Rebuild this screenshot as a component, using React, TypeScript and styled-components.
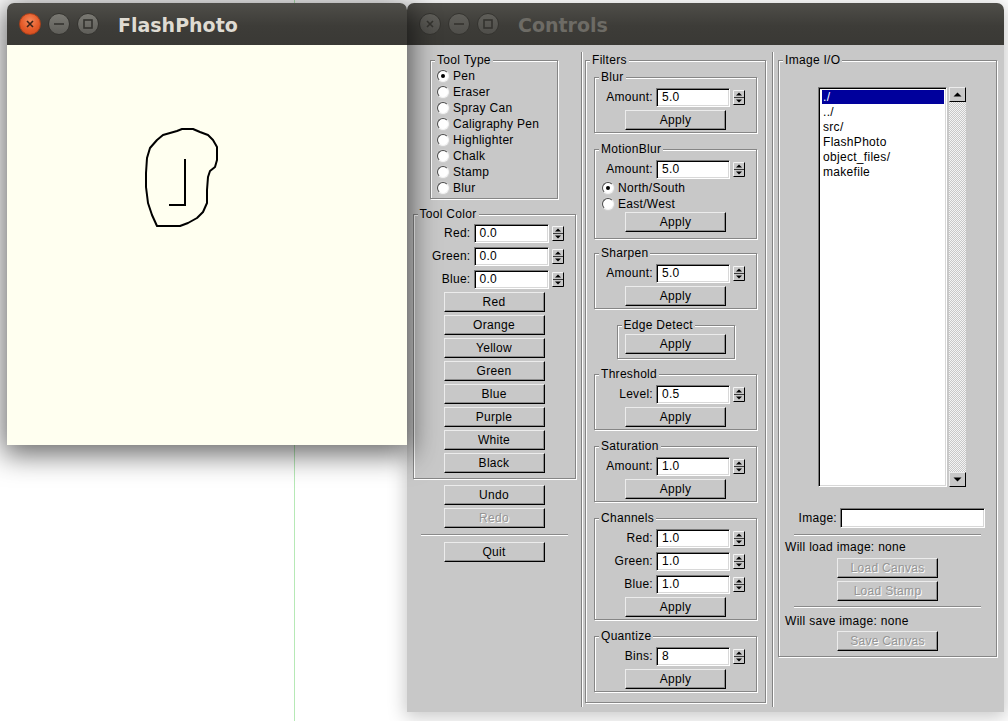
import React from 'react';
import styled, { createGlobalStyle } from 'styled-components';

const GlobalStyle = createGlobalStyle`
  html, body {
    margin: 0;
    padding: 0;
    background: #ffffff;
  }
  body {
    font-family: "Liberation Sans", Arial, Helvetica, sans-serif;
    font-size: 12px;
    color: #000;
    overflow: hidden;
  }
`;

const Desktop = styled.div`
  position: relative;
  width: 1008px;
  height: 721px;
  overflow: hidden;
  background: #ffffff;
`;

const GuideLine = styled.div`
  position: absolute;
  top: 0;
  bottom: 0;
  left: 294px;
  width: 1px;
  background: #b6e9b6;
`;

const Window = styled.div<{ $left: number; $width: number; $height: number; $front?: boolean }>`
  position: absolute;
  top: 3px;
  left: ${(p) => p.$left}px;
  width: ${(p) => p.$width}px;
  height: ${(p) => p.$height}px;
  display: flex;
  flex-direction: column;
  border-radius: 7px 7px 0 0;
  z-index: ${(p) => (p.$front ? 2 : 1)};
  box-shadow: ${(p) =>
    p.$front ? '0 6px 28px 4px rgba(0, 0, 0, 0.58)' : '0 3px 18px 2px rgba(0, 0, 0, 0.22)'};
`;

const TitleBar = styled.div`
  flex: none;
  height: 42px;
  display: flex;
  align-items: center;
  gap: 7px;
  padding-left: 12px;
  border-radius: 7px 7px 0 0;
  background: linear-gradient(#4f4e49, #3d3c38 55%, #3a3935);
`;

const TitleButton = styled.span<{ $tone: 'close' | 'plain' | 'idle' }>`
  box-sizing: border-box;
  width: 22px;
  height: 22px;
  border-radius: 50%;
  display: flex;
  align-items: center;
  justify-content: center;
  border: 1px solid ${(p) => (p.$tone === 'close' ? '#a9401b' : '#353430')};
  background: ${(p) =>
    p.$tone === 'close'
      ? 'radial-gradient(circle at 50% 35%, #f48a5c, #e45a28 55%, #cf4a1c)'
      : p.$tone === 'plain'
      ? 'linear-gradient(#7a7973, #5f5e59)'
      : 'linear-gradient(#5f5e59, #4f4e4a)'};
`;

const WindowTitle = styled.span<{ $active?: boolean }>`
  margin-left: 12px;
  padding-top: 1px;
  font-family: "DejaVu Sans", "Open Sans", sans-serif;
  font-weight: bold;
  font-size: 19px;
  color: ${(p) => (p.$active ? '#dfdbd2' : '#6d6b65')};
`;

const Canvas = styled.div`
  flex: 1;
  background: #fffff0;
  svg {
    display: block;
  }
`;

const ControlsBody = styled.div`
  flex: 1;
  display: flex;
  align-items: flex-start;
  padding-left: 2px;
  background: #c8c8c8;
  letter-spacing: 0.3px;
`;

const Column = styled.div<{ $w: number; $ml: number }>`
  width: ${(p) => p.$w}px;
  margin-left: ${(p) => p.$ml}px;
  padding-top: 8px;
  display: flex;
  flex-direction: column;
  align-items: center;
`;

const ColumnRule = styled.div<{ $ml: number }>`
  align-self: stretch;
  width: 0;
  margin: 7px 0 5px ${(p) => p.$ml}px;
  border-left: 1px solid #828282;
  border-right: 1px solid #ffffff;
`;

const Panel = styled.fieldset<{
  $w: number;
  $mt?: number;
  $pt?: number;
  $pb?: number;
  $gap?: number;
  $align?: string;
}>`
  box-sizing: border-box;
  width: ${(p) => p.$w}px;
  min-inline-size: 0;
  margin: ${(p) => p.$mt ?? 0}px 0 0;
  padding: ${(p) => p.$pt ?? 3}px 0 ${(p) => p.$pb ?? 2}px;
  border: 1px solid #868686;
  box-shadow: inset 1px 1px 0 #ffffff, 1px 1px 0 #ffffff;
  display: flex;
  flex-direction: column;
  align-items: ${(p) => p.$align ?? 'center'};
  gap: ${(p) => p.$gap ?? 3}px;
`;

const PanelLabel = styled.legend`
  margin-left: 4px;
  padding: 0 2px;
  line-height: 14px;
  background: #c8c8c8;
`;

const RadioGroup = styled.div<{ $mt?: number; $mb?: number }>`
  align-self: stretch;
  display: flex;
  flex-direction: column;
  margin: ${(p) => p.$mt ?? 0}px 0 ${(p) => p.$mb ?? 0}px;
`;

const RadioRow = styled.div<{ $pl: number }>`
  height: 16px;
  display: flex;
  align-items: center;
  gap: 4px;
  padding-left: ${(p) => p.$pl}px;
  white-space: nowrap;
`;

const RadioDot = styled.span<{ $on?: boolean }>`
  box-sizing: border-box;
  flex: none;
  width: 12px;
  height: 12px;
  border-radius: 50%;
  border: 1px solid;
  border-color: #4a4a4a #f2f2f2 #f2f2f2 #4a4a4a;
  background: #ffffff;
  box-shadow: 0 0 0 1px #d0d0d0;
  display: flex;
  align-items: center;
  justify-content: center;
  &::after {
    content: '';
    display: ${(p) => (p.$on ? 'block' : 'none')};
    width: 4px;
    height: 4px;
    border-radius: 50%;
    background: #000;
  }
`;

const FieldRow = styled.div<{ $mt?: number }>`
  align-self: stretch;
  height: 20px;
  margin-top: ${(p) => p.$mt ?? 0}px;
  display: flex;
  align-items: center;
  justify-content: flex-end;
  padding-right: 11px;
`;

const FieldLabel = styled.span`
  margin-right: 3px;
  white-space: nowrap;
`;

const TextBox = styled.div<{ $w: number; $h?: number }>`
  box-sizing: border-box;
  width: ${(p) => p.$w}px;
  height: ${(p) => p.$h ?? 19}px;
  padding-left: 5px;
  line-height: ${(p) => (p.$h ?? 19) - 2}px;
  background: #ffffff;
  border: 1px solid;
  border-color: #7a7a7a #ffffff #ffffff #7a7a7a;
  box-shadow: inset 1px 1px 0 #000, inset -1px -1px 0 #d8d8d8;
`;

const SpinnerSvg = styled.svg`
  flex: none;
  display: block;
  margin-left: 3px;
`;

const Spinner = () => (
  <SpinnerSvg width="12" height="15" viewBox="0 0 12 15">
    <rect x="0" y="0" width="12" height="15" fill="#c8c8c8" />
    <path d="M0.5 14.5 V0.5 H11.5" stroke="#f4f4f4" fill="none" />
    <path d="M0.5 14.5 H11.5 V0.5" stroke="#000" fill="none" />
    <path d="M1 7.5 H11" stroke="#3a3a3a" />
    <path d="M3 5.5 L6 2.5 L9 5.5 Z" fill="#000" />
    <path d="M3 9.5 L6 12.5 L9 9.5 Z" fill="#000" />
  </SpinnerSvg>
);

const Button = styled.button<{ $mt?: number; $off?: boolean }>`
  box-sizing: border-box;
  align-self: center;
  flex: none;
  width: 101px;
  height: 20px;
  margin: ${(p) => p.$mt ?? 0}px 0 0;
  padding: 0;
  font: inherit;
  letter-spacing: inherit;
  background: #c8c8c8;
  border: 1px solid;
  border-color: #ececec #000 #000 #ececec;
  box-shadow: inset -1px -1px 0 #8c8c8c;
  color: ${(p) => (p.$off ? '#959595' : '#000')};
  text-shadow: ${(p) => (p.$off ? '1px 1px 0 #ffffff' : 'none')};
  line-height: 17px;
`;

const HRule = styled.div<{ $w: number; $mt: number }>`
  align-self: center;
  width: ${(p) => p.$w}px;
  height: 0;
  margin-top: ${(p) => p.$mt}px;
  border-top: 1px solid #8a8a8a;
  border-bottom: 1px solid #ffffff;
`;

const InfoText = styled.div<{ $mt: number }>`
  margin-top: ${(p) => p.$mt}px;
  padding-left: 6px;
  line-height: 14px;
  white-space: nowrap;
`;

const FileArea = styled.div`
  display: flex;
  height: 400px;
  margin: 20px 0 0 39px;
`;

const ListBox = styled.div`
  box-sizing: border-box;
  width: 129px;
  height: 100%;
  padding: 2px 2px 2px 3px;
  background: #ffffff;
  border: 1px solid;
  border-color: #7a7a7a #ffffff #ffffff #7a7a7a;
  box-shadow: inset 1px 1px 0 #000, inset -1px -1px 0 #d8d8d8;
`;

const ListItem = styled.div<{ $sel?: boolean }>`
  height: 15px;
  line-height: 14px;
  padding-left: 1px;
  white-space: nowrap;
  color: ${(p) => (p.$sel ? '#ffffff' : '#000')};
  background: ${(p) => (p.$sel ? 'linear-gradient(#00009c 0 14px, transparent 14px)' : 'none')};
`;

const ScrollBar = styled.div`
  width: 17px;
  margin-left: 2px;
  display: flex;
  flex-direction: column;
`;

const ScrollButton = styled.div`
  box-sizing: border-box;
  height: 15px;
  display: flex;
  align-items: center;
  justify-content: center;
  background: #c8c8c8;
  border: 1px solid;
  border-color: #ececec #000 #000 #ececec;
`;

const ScrollTrack = styled.div`
  flex: 1;
  background-color: #c8c8c8;
  background-image: repeating-conic-gradient(#f4f4f4 0 25%, transparent 0 50%);
  background-size: 2px 2px;
`;

const Arrow = ({ down }: { down?: boolean }) => (
  <svg width="9" height="5" viewBox="0 0 9 5" style={{ display: 'block' }}>
    <path d={down ? 'M0.5 0.5 H8.5 L4.5 4.5 Z' : 'M0.5 4.5 H8.5 L4.5 0.5 Z'} fill="#000" />
  </svg>
);

const TitleIcon = ({ kind, color }: { kind: 'close' | 'min' | 'max'; color: string }) => (
  <svg width="12" height="12" viewBox="0 0 12 12" style={{ display: 'block' }}>
    {kind === 'close' && <path d="M3 3 L9 9 M9 3 L3 9" stroke={color} strokeWidth="1.6" />}
    {kind === 'min' && <path d="M1 6 H11" stroke={color} strokeWidth="1.6" />}
    {kind === 'max' && <rect x="2" y="2" width="8" height="8" fill="none" stroke={color} strokeWidth="1.6" />}
  </svg>
);

const WindowButtons = ({ active }: { active?: boolean }) => (
  <>
    <TitleButton $tone={active ? 'close' : 'idle'}>
      <TitleIcon kind="close" color={active ? '#3a2218' : '#34332f'} />
    </TitleButton>
    <TitleButton $tone={active ? 'plain' : 'idle'}>
      <TitleIcon kind="min" color="#34332f" />
    </TitleButton>
    <TitleButton $tone={active ? 'plain' : 'idle'}>
      <TitleIcon kind="max" color="#34332f" />
    </TitleButton>
  </>
);

const tools = ['Pen', 'Eraser', 'Spray Can', 'Caligraphy Pen', 'Highlighter', 'Chalk', 'Stamp', 'Blur'];
const colors = ['Red', 'Orange', 'Yellow', 'Green', 'Blue', 'Purple', 'White', 'Black'];
const files = ['./', '../', 'src/', 'FlashPhoto', 'object_files/', 'makefile'];

const Field = ({ label, value, w = 75, spin = true }: { label: string; value: string; w?: number; spin?: boolean }) => (
  <FieldRow>
    <FieldLabel>{label}</FieldLabel>
    <TextBox $w={w}>{value}</TextBox>
    {spin && <Spinner />}
  </FieldRow>
);

const FilterPanel = ({
  title,
  mt,
  pb,
  children,
}: {
  title: string;
  mt?: number;
  pb?: number;
  children: React.ReactNode;
}) => (
  <Panel $w={163} $mt={mt} $pt={3} $pb={pb ?? 2}>
    <PanelLabel>{title}</PanelLabel>
    {children}
  </Panel>
);

const stroke =
  'M190,129 L182,129 177,131 170,133 163,135 157,140 150,148 147,158 146,173 146,187 148,203 152,215 157,226 ' +
  'L180,226 188,223 197,218 203,212 207,203 207,190 208,177 210,171 215,167 217,160 217,147 213,140 208,135 200,132 193,129 Z';

export default function App() {
  return (
    <Desktop>
      <GlobalStyle />
      <GuideLine />

      <Window $left={7} $width={400} $height={442} $front>
        <TitleBar>
          <WindowButtons active />
          <WindowTitle $active>FlashPhoto</WindowTitle>
        </TitleBar>
        <Canvas>
          <svg width="400" height="400" viewBox="7 45 400 400">
            <path d={stroke} fill="none" stroke="#000" strokeWidth="2" strokeLinejoin="round" />
            <path d="M185,159 L185,205 L169,205" fill="none" stroke="#000" strokeWidth="2" />
          </svg>
        </Canvas>
      </Window>

      <Window $left={407} $width={597} $height={709}>
        <TitleBar>
          <WindowButtons />
          <WindowTitle>Controls</WindowTitle>
        </TitleBar>
        <ControlsBody>
          <Column $w={170} $ml={0}>
            <Panel $w={128} $pt={1} $pb={2} $gap={0} $align="stretch">
              <PanelLabel>Tool Type</PanelLabel>
              {tools.map((t) => (
                <RadioRow key={t} $pl={6}>
                  <RadioDot $on={t === 'Pen'} />
                  {t}
                </RadioRow>
              ))}
            </Panel>
            <Panel $w={163} $mt={8} $pt={2} $pb={5}>
              <PanelLabel>Tool Color</PanelLabel>
              <Field label="Red:" value="0.0" />
              <Field label="Green:" value="0.0" />
              <Field label="Blue:" value="0.0" />
              {colors.map((c) => (
                <Button key={c}>{c}</Button>
              ))}
            </Panel>
            <Button $mt={6}>Undo</Button>
            <Button $mt={3} $off>
              Redo
            </Button>
            <HRule $w={147} $mt={6} />
            <Button $mt={6}>Quit</Button>
          </Column>

          <ColumnRule $ml={2} />

          <Column $w={183} $ml={1}>
            <Panel $w={181} $pt={3} $pb={10} $gap={0}>
              <PanelLabel>Filters</PanelLabel>
              <FilterPanel title="Blur">
                <Field label="Amount:" value="5.0" w={74} />
                <Button>Apply</Button>
              </FilterPanel>
              <FilterPanel title="MotionBlur" mt={9} pb={6}>
                <Field label="Amount:" value="5.0" w={74} />
                <RadioGroup $mt={-2} $mb={-3}>
                  <RadioRow $pl={7}>
                    <RadioDot $on />
                    North/South
                  </RadioRow>
                  <RadioRow $pl={7}>
                    <RadioDot />
                    East/West
                  </RadioRow>
                </RadioGroup>
                <Button>Apply</Button>
              </FilterPanel>
              <FilterPanel title="Sharpen" mt={7}>
                <Field label="Amount:" value="5.0" w={74} />
                <Button>Apply</Button>
              </FilterPanel>
              <Panel $w={118} $mt={9} $pt={2} $pb={4}>
                <PanelLabel>Edge Detect</PanelLabel>
                <Button>Apply</Button>
              </Panel>
              <FilterPanel title="Threshold" mt={8}>
                <Field label="Level:" value="0.5" w={74} />
                <Button>Apply</Button>
              </FilterPanel>
              <FilterPanel title="Saturation" mt={9}>
                <Field label="Amount:" value="1.0" w={74} />
                <Button>Apply</Button>
              </FilterPanel>
              <FilterPanel title="Channels" mt={9}>
                <Field label="Red:" value="1.0" w={74} />
                <Field label="Green:" value="1.0" w={74} />
                <Field label="Blue:" value="1.0" w={74} />
                <Button>Apply</Button>
              </FilterPanel>
              <FilterPanel title="Quantize" mt={9}>
                <Field label="Bins:" value="8" w={74} />
                <Button>Apply</Button>
              </FilterPanel>
            </Panel>
          </Column>

          <ColumnRule $ml={5} />

          <Column $w={219} $ml={4}>
            <Panel $w={219} $pt={0} $pb={5} $gap={0} $align="stretch">
              <PanelLabel>Image I/O</PanelLabel>
              <FileArea>
                <ListBox>
                  {files.map((f, i) => (
                    <ListItem key={f} $sel={i === 0}>
                      {f}
                    </ListItem>
                  ))}
                </ListBox>
                <ScrollBar>
                  <ScrollButton>
                    <Arrow />
                  </ScrollButton>
                  <ScrollTrack />
                  <ScrollButton>
                    <Arrow down />
                  </ScrollButton>
                </ScrollBar>
              </FileArea>
              <FieldRow $mt={21}>
                <FieldLabel>Image:</FieldLabel>
                <TextBox $w={145} $h={20} />
              </FieldRow>
              <HRule $w={187} $mt={6} />
              <InfoText $mt={4}>Will load image: none</InfoText>
              <Button $mt={4} $off>
                Load Canvas
              </Button>
              <Button $mt={3} $off>
                Load Stamp
              </Button>
              <HRule $w={187} $mt={5} />
              <InfoText $mt={6}>Will save image: none</InfoText>
              <Button $mt={3} $off>
                Save Canvas
              </Button>
            </Panel>
          </Column>
        </ControlsBody>
      </Window>
    </Desktop>
  );
}
